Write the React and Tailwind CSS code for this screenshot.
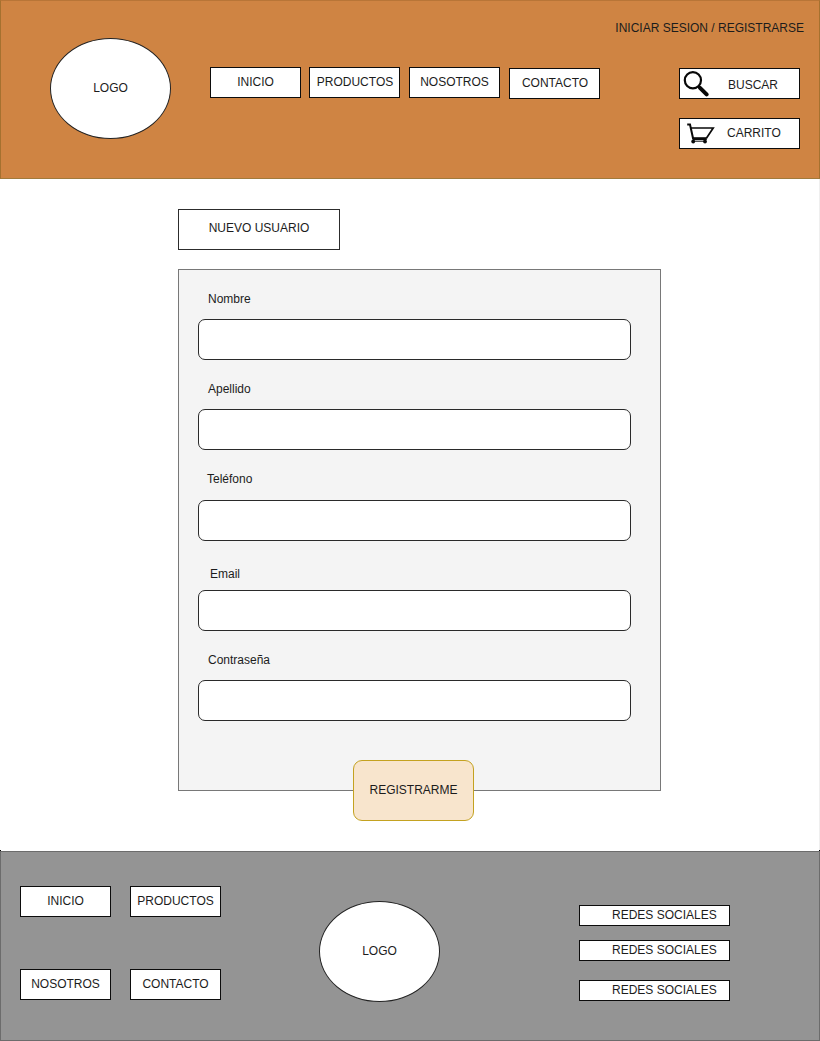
const NAV = ["INICIO", "PRODUCTOS", "NOSOTROS", "CONTACTO"];

const FIELDS = [
  { id: "nombre", label: "Nombre", type: "text", row: "h-[89px] pt-[22px]", text: "pl-[10px]", gap: "mt-[13px]" },
  { id: "apellido", label: "Apellido", type: "text", row: "h-[90px] pt-[23px]", text: "pl-[10px]", gap: "mt-[13px]" },
  { id: "telefono", label: "Teléfono", type: "tel", row: "h-[91px] pt-[23px]", text: "pl-[9px]", gap: "mt-[14px]" },
  { id: "email", label: "Email", type: "email", row: "h-[90px] pt-[27px]", text: "pl-[12px]", gap: "mt-[9px]" },
  { id: "contrasena", label: "Contraseña", type: "password", row: "h-[90px] pt-[23px]", text: "pl-[10px]", gap: "mt-[13px]" },
];

function NavBox({ children, className = "" }) {
  return (
    <a className={`block h-[31px] w-[91px] border border-[#0c0c0c] bg-white pt-[7px] text-center whitespace-nowrap ${className}`}>
      {children}
    </a>
  );
}

function Logo({ className = "" }) {
  return (
    <div className={`flex h-[101px] w-[121px] items-center justify-center rounded-[50%] border border-[#222] bg-white pb-px ${className}`}>
      LOGO
    </div>
  );
}

function SearchIcon() {
  return (
    <svg className="mt-[2px] ml-[3px] h-[26px] w-[26px]" viewBox="0 0 26 26" fill="none" stroke="#080808">
      <circle cx="9.9" cy="9.3" r="8.1" strokeWidth="2.2" />
      <path d="M15.2 14.8l2.4 2.4" strokeWidth="2.4" />
      <path d="M17 16.8l6.6 6.6" strokeWidth="4" strokeLinecap="round" />
    </svg>
  );
}

function CartIcon() {
  return (
    <svg className="mt-[4px] ml-[7px] h-[22px] w-[28px]" viewBox="0 0 28 22" fill="none" stroke="#0a0a0a">
      <path d="M0.2 1.5h2.8L6.2 16" strokeWidth="2" />
      <path d="M3.8 5h22.4L19.4 15.2" strokeWidth="1.7" />
      <path d="M5.6 15.6h14.2" strokeWidth="2.8" />
      <path d="M5 18.2h14" strokeWidth="1" />
      <circle cx="6.2" cy="18.5" r="1.9" fill="#0a0a0a" stroke="none" />
      <circle cx="18" cy="18.5" r="1.9" fill="#0a0a0a" stroke="none" />
    </svg>
  );
}

export default function App() {
  return (
    <div className="flex h-[1041px] w-[820px] flex-col bg-white font-['Liberation_Sans',Arial,sans-serif] text-[12px] leading-[14px] text-[#1c1c1c]">
      <header className="flex h-[179px] shrink-0 border border-t-[#b87537] border-r-[#a5712f] border-b-[#a17a3c] border-l-[#a5712f] bg-[#cf8443]">
        <Logo className="mt-[37px] ml-[49px]" />
        <nav className="mt-[66px] ml-[39px] flex gap-[9px]">
          {NAV.map((name, i) => (
            <NavBox key={name} className={i === 1 ? "-ml-px pl-px" : i === 3 ? "mt-px pl-px" : ""}>{name}</NavBox>
          ))}
        </nav>
        <div className="mr-[15px] ml-auto flex flex-col items-end pt-[20px]">
          <a className="whitespace-nowrap">INICIAR SESION / REGISTRARSE</a>
          <button className="mt-[33px] mr-[4px] flex h-[31px] w-[121px] items-start border border-[#0c0c0c] bg-white">
            <SearchIcon />
            <span className="mt-[9px] ml-[19px]">BUSCAR</span>
          </button>
          <button className="mt-[19px] mr-[4px] flex h-[31px] w-[121px] items-start border border-[#0c0c0c] bg-white">
            <CartIcon />
            <span className="mt-[7px] ml-[12px]">CARRITO</span>
          </button>
        </div>
      </header>

      <main className="flex h-[672px] shrink-0 flex-col border-r border-[#efefef] pl-[178px]">
        <h1 className="mt-[30px] h-[41px] w-[162px] border border-[#2c2c2c] pt-[11px] text-center">NUEVO USUARIO</h1>
        <form className="mt-[19px] flex h-[522px] w-[483px] flex-col border border-[#787878] bg-[#f4f4f4] pl-[19px]">
          {FIELDS.map((f) => (
            <div key={f.id} className={`shrink-0 ${f.row}`}>
              <label htmlFor={f.id} className={`block ${f.text}`}>{f.label}</label>
              <input
                id={f.id}
                type={f.type}
                className={`block h-[41px] w-[433px] rounded-[7px] border border-[#2a2a2a] bg-white px-3 ${f.gap}`}
              />
            </div>
          ))}
          <button
            type="button"
            className="mt-[40px] ml-[155px] h-[61px] w-[121px] shrink-0 rounded-[9px] border border-[#c4a220] bg-[#f8e5cd] pb-[2px]"
          >
            REGISTRARME
          </button>
        </form>
      </main>

      <footer className="relative flex h-[190px] shrink-0 border border-[#6c6c6c] bg-[#949494]">
        <span className="absolute -top-[2px] -left-px size-px bg-black" />
        <span className="absolute -top-[2px] -right-px size-px bg-black" />
        <nav className="mt-[34px] ml-[19px] grid h-[114px] grid-cols-[91px_91px] content-between gap-x-[19px]">
          {NAV.map((name) => (
            <NavBox key={name}>{name}</NavBox>
          ))}
        </nav>
        <Logo className="mt-[49px] ml-[98px]" />
        <ul className="mt-[53px] ml-[139px] flex flex-col">
          {["mt-0", "mt-[14px]", "mt-[19px]"].map((gap) => (
            <li key={gap} className={`h-[21px] w-[151px] border border-[#0c0c0c] bg-white pt-[2px] pl-[32px] whitespace-nowrap ${gap}`}>
              REDES SOCIALES
            </li>
          ))}
        </ul>
      </footer>
    </div>
  );
}
